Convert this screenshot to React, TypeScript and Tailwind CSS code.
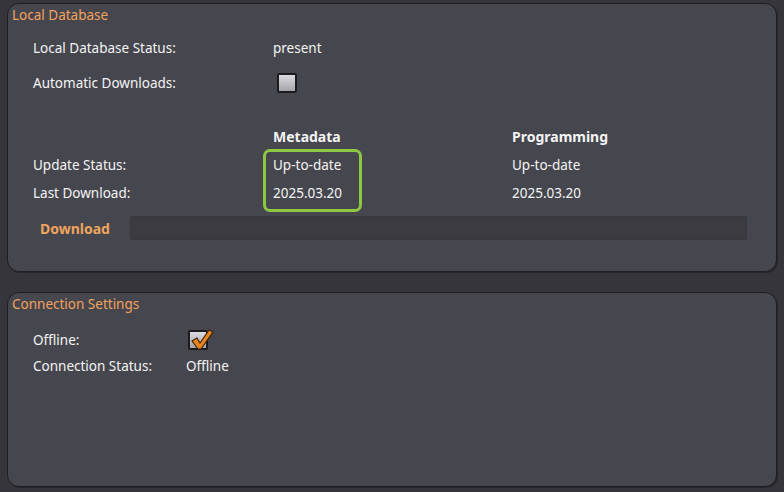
import React from 'react';

const Panel: React.FC<{ title: string; className?: string; children: React.ReactNode }> = ({ title, className = '', children }) => (
  <div
    className={`rounded-[12px] border border-[#1e1e22] bg-[#46464e] shadow-[1px_1px_0_#26262a] ${className}`}
  >
    <div className="px-[4px] pt-[1px] text-[13.5px] leading-[20px] text-[#f2a25c]">{title}</div>
    {children}
  </div>
);

const Checkbox: React.FC<{ checked?: boolean }> = ({ checked }) => (
  <div className="relative h-[20px] w-[20px] rounded-[2px] border-2 border-[#1c1c20] bg-gradient-to-b from-[#dcdce0] to-[#a4a4aa]">
    {checked && (
      <svg className="absolute -left-[1px] -top-[4px]" width="26" height="24" viewBox="0 0 26 24">
        <path
          d="M3 13 L8 10 L11 15 L20 2 L24 4 L12 21 L9 21 Z"
          fill="#e8841c"
          stroke="#3a2208"
          strokeWidth="1.2"
          strokeLinejoin="round"
        />
      </svg>
    )}
  </div>
);

export default function App() {
  return (
    <div
      className="flex h-[492px] w-[784px] flex-col gap-[20px] bg-[#35353b] pl-[7px] pr-[7px] pt-[3px] text-[13.5px] text-[#f4f4f4]"
      style={{ fontFamily: '"Noto Sans", "Open Sans", sans-serif' }}
    >
      {/* Local Database */}
      <Panel title="Local Database" className="h-[269px]">
        <div className="flex flex-col pl-[25px] pt-[11px]">
          <div className="flex h-[24px] items-center">
            <span className="w-[240px]">Local Database Status:</span>
            <span>present</span>
          </div>
          <div className="mt-[11px] flex h-[24px] items-center">
            <span className="w-[244px]">Automatic Downloads:</span>
            <Checkbox />
          </div>

          <div className="relative mt-[29px] flex flex-col">
            <div className="flex h-[24px] items-center text-[14px] font-bold">
              <span className="w-[240px]" />
              <span className="w-[239px]">Metadata</span>
              <span>Programming</span>
            </div>
            <div className="mt-[5px] flex h-[24px] items-center">
              <span className="w-[240px]">Update Status:</span>
              <span className="w-[239px]">Up-to-date</span>
              <span>Up-to-date</span>
            </div>
            <div className="mt-[4px] flex h-[24px] items-center">
              <span className="w-[240px]">Last Download:</span>
              <span className="w-[239px]">2025.03.20</span>
              <span>2025.03.20</span>
            </div>
            <div className="pointer-events-none absolute left-[230px] top-[25px] h-[63px] w-[99px] rounded-[7px] border-[3px] border-[#8dc840]" />
          </div>

          <div className="mt-[11px] flex h-[24px] items-center pr-[29px]">
            <span className="w-[97px] pl-[7px] text-[14px] font-bold text-[#eea45c]">Download</span>
            <div className="h-[24px] flex-1 rounded-[3px] border border-[#38383e] bg-[#3b3b41]" />
          </div>
        </div>
      </Panel>

      {/* Connection Settings */}
      <Panel title="Connection Settings" className="h-[195px]">
        <div className="flex flex-col pl-[25px] pt-[14px]">
          <div className="flex h-[24px] items-center">
            <span className="w-[155px]">Offline:</span>
            <Checkbox checked />
          </div>
          <div className="mt-[2px] flex h-[24px] items-center">
            <span className="w-[153px]">Connection Status:</span>
            <span>Offline</span>
          </div>
        </div>
      </Panel>
    </div>
  );
}
